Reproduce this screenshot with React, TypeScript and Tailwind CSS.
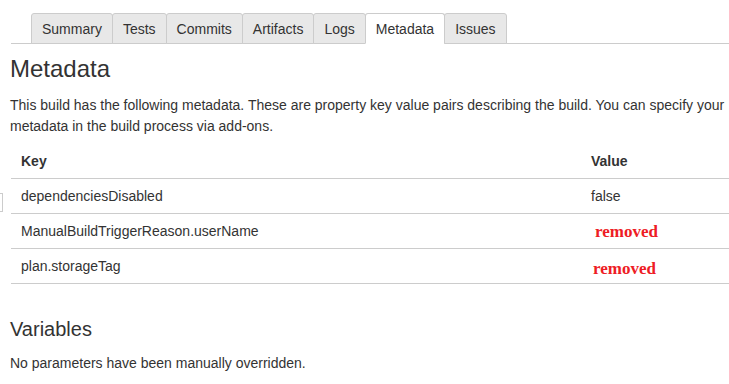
const tabs = ["Summary", "Tests", "Commits", "Artifacts", "Logs", "Metadata", "Issues"];

const rows: { key: string; value: string; removed?: boolean; shift?: string }[] = [
  { key: "dependenciesDisabled", value: "false" },
  { key: "ManualBuildTriggerReason.userName", value: "removed", removed: true, shift: "ml-[4px] top-[1px]" },
  { key: "plan.storageTag", value: "removed", removed: true, shift: "ml-[2px] top-[3px]" },
];

export default function App() {
  return (
    <div className="relative w-[729px] h-[384px] overflow-hidden bg-white text-[#333] font-['Liberation_Sans',Arial,sans-serif] text-[14px]">
      {/* stray box edge at the left */}
      <div className="absolute left-[-10px] top-[193px] w-[13px] h-[19px] border border-[#ccc] bg-white" />

      <div className="pt-[13px] pl-[11px]">
        <ul className="flex w-[760px] border-b border-[#ccc] pl-[20px]">
          {tabs.map((t, i) => {
            const active = t === "Metadata";
            return (
              <li
                key={t}
                className={`-mb-px ${i > 0 ? "-ml-px" : ""} h-[31px] flex items-center px-[10px] border border-[#ccc] rounded-t-[3px] leading-[20px] ${
                  active ? "bg-white border-b-white text-[#333]" : "bg-[#e8e8e8] text-[#333]"
                }`}
              >
                {t}
              </li>
            );
          })}
        </ul>
      </div>

      <div className="pl-[10px]">
        <h3 className="mt-[12px] text-[24px] leading-[26.4px] font-normal text-[#333]">Metadata</h3>
        <p className="mt-[13px] w-[740px] leading-[21px]">
          This build has the following metadata. These are property key value pairs describing the build. You can specify your
          metadata in the build process via add-ons.
        </p>
      </div>

      <table className="ml-[11px] mt-[7px] w-[740px] border-collapse">
        <thead>
          <tr className="border-b border-[#ccc]">
            <th className="w-[570px] text-left font-bold pl-[10px] py-[7px] leading-[20px]">Key</th>
            <th className="text-left font-bold pl-[10px] py-[7px] leading-[20px]">Value</th>
          </tr>
        </thead>
        <tbody>
          {rows.map((r) => (
            <tr key={r.key} className="border-b border-[#ccc]">
              <td className="pl-[10px] py-[7px] leading-[20px]">{r.key}</td>
              <td className="pl-[10px] py-[7px] leading-[20px]">
                {r.removed ? (
                  <span
                    className={`relative inline-block ${r.shift} font-['Liberation_Serif','Times_New_Roman',serif] font-bold text-[17px] leading-[20px] text-[#ee1c25]`}
                  >
                    {r.value}
                  </span>
                ) : (
                  r.value
                )}
              </td>
            </tr>
          ))}
        </tbody>
      </table>

      <div className="pl-[10px]">
        <h4 className="mt-[34px] text-[20px] leading-[22px] font-normal">Variables</h4>
        <p className="mt-[13px] leading-[21px]">No parameters have been manually overridden.</p>
      </div>
    </div>
  );
}
